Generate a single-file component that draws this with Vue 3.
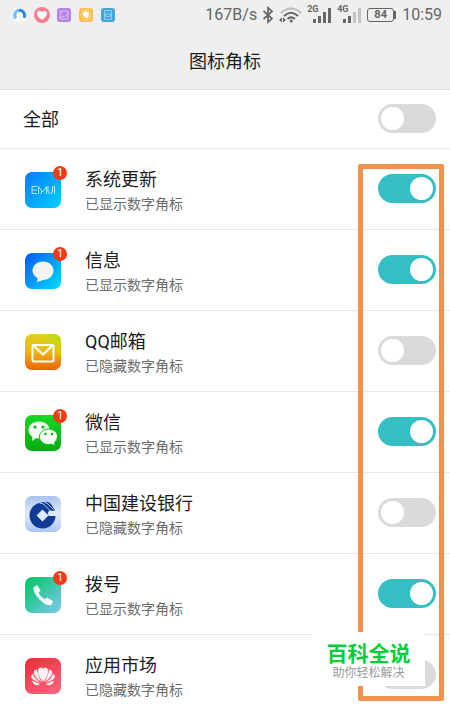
<script setup>
import { ref } from 'vue'

const all = ref(false)
const apps = ref([
  { id: 'emui', name: '系统更新', on: true },
  { id: 'sms', name: '信息', on: true },
  { id: 'mail', name: 'QQ邮箱', on: false },
  { id: 'wechat', name: '微信', on: true },
  { id: 'bank', name: '中国建设银行', on: false },
  { id: 'dial', name: '拨号', on: true },
  { id: 'market', name: '应用市场', on: false },
])
</script>

<template>
  <div class="page">
    <header class="top">
      <div class="status">
        <div class="notes">
          <svg width="16" height="16" viewBox="0 0 16 16">
            <rect x="1" y="1" width="14" height="14" rx="4" fill="#f8f8f8" />
            <path d="M3.800 11.500A5.200 5.200 0 1 1 13 9.500" fill="none" stroke="#6cc0f8" stroke-width="3" />
            <path d="M7 3.500Q13 3.500 12.500 11" fill="none" stroke="#2b7fe0" stroke-width="2.500" />
          </svg>
          <svg width="16" height="16" viewBox="0 0 16 16">
            <circle cx="8" cy="8" r="8" fill="#fa7d8e" />
            <path d="M8 12.800C1 8.500 2.500 3.500 5.800 3.800Q7.400 4 8 5.200Q8.600 4 10.200 3.800C13.500 3.500 15 8.500 8 12.800Z" fill="#fff" />
          </svg>
          <svg width="16" height="16" viewBox="0 0 16 16">
            <rect x="1" y="1" width="14" height="14" rx="3" fill="#b57fe6" />
            <path d="M4 4H12V12H4ZM4 11L7 9L8.500 10L12 6M5.500 6H7" fill="none" stroke="#e3ccf8" stroke-width=".9" />
          </svg>
          <svg width="16" height="16" viewBox="0 0 16 16">
            <rect x="1" y="1" width="14" height="14" rx="3" fill="#fbbd4c" />
            <path d="M5.500 3H10.500L13.200 8L10.500 13H5.500L2.800 8Z" fill="none" stroke="#fddc98" />
            <path d="M5 8V5.800H6V4.800H7.200V4.300H8.500V4.800H9.700V5.600H10.800V9Q10.500 11.300 8.500 11.300Q6.500 11.300 5 8Z" fill="#fff" />
          </svg>
          <svg width="16" height="16" viewBox="0 0 16 16">
            <rect x="1" y="1" width="14" height="14" rx="3" fill="#42a5dc" />
            <path d="M4.500 3.500H11.500V12.500H4.500ZM5.500 7H10.500V9.500H5.500Z" fill="none" stroke="#93d0f0" stroke-width=".9" />
          </svg>
        </div>
        <div class="system">
          <span class="clock">167B/s</span>
          <svg width="12" height="18" viewBox="0 0 12 18">
            <path d="M1.500 5L10 12.500L6 16.200V1.800L10 5.500L1.500 13" fill="none" stroke="#666" stroke-width="1.700" />
          </svg>
          <svg width="23" height="18" viewBox="0 0 23 18">
            <g fill="none" stroke-width="2">
              <path d="M2 7Q12 -2 22 7" stroke="#bbb" />
              <path d="M5 10Q12 3.500 19 10M8.500 13Q12 9.800 16 13" stroke="#666" />
            </g>
            <circle cx="12.200" cy="15" r="1.600" fill="#666" />
            <path d="M0 14L3 11.500V16.500ZM7 14L4 11.500V16.500Z" fill="#666" />
          </svg>
          <div class="signal">
            <span class="net">2G</span>
            <svg width="20" height="18" viewBox="0 0 20 18">
              <path d="M1 13H4V17H1ZM6 10H9V17H6ZM11 6H14V17H11ZM16 2H19V17H16Z" fill="#666" />
            </svg>
          </div>
          <div class="signal">
            <span class="net">4G</span>
            <svg width="20" height="18" viewBox="0 0 20 18">
              <path d="M1 13H4V17H1ZM6 10H9V17H6Z" fill="#666" />
              <path d="M11 6H14V17H11ZM16 2H19V17H16Z" fill="#c4c4c4" />
            </svg>
          </div>
          <span class="battery">84</span>
          <span class="clock">10:59</span>
        </div>
      </div>
      <h1>图标角标</h1>
    </header>

    <label class="all">
      <span class="name">全部</span>
      <input v-model="all" class="switch" type="checkbox" role="switch" />
    </label>

    <main>
      <label v-for="app in apps" :key="app.id" class="row">
        <span class="icon">
          <svg v-if="app.id === 'emui'" viewBox="0 0 36 36">
            <defs><linearGradient id="g-emui" x1="0" y1="0" x2="1" y2="1"><stop stop-color="#087bfa" /><stop offset="1" stop-color="#00d0ff" /></linearGradient></defs>
            <rect width="36" height="36" rx="7" fill="url(#g-emui)" />
            <path d="M12 14.500H7V21.500H12M7 18H12M13.500 22V14.500L17.500 20L21.500 14.500V22M15.500 22L17.500 19M23 14V19Q23 21.500 25.500 21.500Q27.500 21.500 27.500 19V14M29.500 14V22" fill="none" stroke="#d5f1ff" stroke-width=".9" />
          </svg>
          <svg v-else-if="app.id === 'sms'" viewBox="0 0 36 36">
            <defs><linearGradient id="g-sms" x1="0" y1="0" x2="1" y2="1"><stop stop-color="#0758f5" /><stop offset="1" stop-color="#00dcff" /></linearGradient></defs>
            <rect width="36" height="36" rx="7" fill="url(#g-sms)" />
            <path d="M18 8.500C24 8.500 28.500 12.500 28.500 17.500S24 27 18 27Q15.500 28.500 11.500 29Q13 27 12.500 25.200Q7.500 22 7.500 17.500C7.500 12.500 12 8.500 18 8.500Z" fill="#f2f3f5" />
          </svg>
          <svg v-else-if="app.id === 'mail'" viewBox="0 0 36 36">
            <defs>
              <linearGradient id="g-mail" x1="0" y1="0" x2="0" y2="1"><stop stop-color="#dfd020" /><stop offset=".5" stop-color="#f1b414" /><stop offset="1" stop-color="#ed6208" /></linearGradient>
              <radialGradient id="g-lime" cx="1" cy="0" r=".7"><stop stop-color="#a5e010" /><stop offset="1" stop-color="#d9dc20" stop-opacity="0" /></radialGradient>
            </defs>
            <rect width="36" height="36" rx="7" fill="url(#g-mail)" />
            <rect width="36" height="36" rx="7" fill="url(#g-lime)" />
            <rect x="7.500" y="11" width="21" height="16.500" rx="1" fill="none" stroke="#fff" stroke-width="2" />
            <path d="M9 12L18 20.500L27 12" fill="none" stroke="#fff" stroke-width="2" />
          </svg>
          <svg v-else-if="app.id === 'wechat'" viewBox="0 0 36 36">
            <defs><linearGradient id="g-we" x1="0" y1="0" x2="0" y2="1"><stop stop-color="#14d923" /><stop offset="1" stop-color="#05aa10" /></linearGradient></defs>
            <rect width="36" height="36" rx="7" fill="url(#g-we)" />
            <path d="M14 6.500C20 6.500 24.500 10 24.500 15S20 23.500 14 23.500L11 23.200L7 26L7.500 22Q3.500 19 3.500 15C3.500 10 8 6.500 14 6.500Z" fill="#f5fff5" />
            <path d="M23.500 14C28.500 14 32.500 17.300 32.500 21.500Q32.500 25 29.500 27.500L30 31L26.500 29L23.500 29.500C18.500 29.500 14.500 26 14.500 21.700S18.500 14 23.500 14Z" fill="#f5fff5" stroke="#0bbd18" />
            <g fill="#0bb817"><circle cx="10" cy="12" r="1.600" /><circle cx="18" cy="12" r="1.600" /><circle cx="20.500" cy="19" r="1.300" /><circle cx="27" cy="19" r="1.300" /></g>
          </svg>
          <svg v-else-if="app.id === 'bank'" viewBox="0 0 36 36">
            <defs><linearGradient id="g-bank" x1="0" y1="0" x2="0" y2="1"><stop stop-color="#a9c3ef" /><stop offset=".5" stop-color="#e0eafc" /><stop offset="1" stop-color="#a9c4f6" /></linearGradient></defs>
            <rect width="36" height="36" rx="7" fill="url(#g-bank)" />
            <circle cx="17.500" cy="19.500" r="13" fill="#123b98" />
            <path d="M17.500 13.500L23.500 19.500L17.500 25.500L11.500 19.500Z" fill="#dce8fc" />
            <path d="M24 14.500H32V20H24L22.500 18.300Z" fill="#dce8fc" />
            <path d="M19 6Q23 4.800 26 8L30 14.500H24.500L15.500 7Z" fill="#123b98" />
            <path d="M14.500 7Q18 7 20 9.500L25.500 15M19.500 6.500Q22.500 7 24 9L28.500 13.500" fill="none" stroke="#c8d9f7" stroke-width=".9" />
          </svg>
          <svg v-else-if="app.id === 'dial'" viewBox="0 0 36 36">
            <defs><linearGradient id="g-dial" x1="0" y1="0" x2="1" y2="1"><stop offset=".15" stop-color="#0dc774" /><stop offset="1" stop-color="#80c9f2" /></linearGradient></defs>
            <rect width="36" height="36" rx="7" fill="url(#g-dial)" />
            <path d="M9 10.500L12 8.500L15 13.500L13.200 16Q15.500 20.500 19.700 22.800L22 21L27.300 24Q27.500 26 25.500 28Q21 28.500 15.500 23Q8.500 16 9 10.500Z" fill="#f4fbf8" stroke="#f4fbf8" stroke-linejoin="round" />
          </svg>
          <svg v-else viewBox="0 0 36 36">
            <defs><linearGradient id="g-mk" x1="0" y1="0" x2=".6" y2="1"><stop stop-color="#ed2a37" /><stop offset="1" stop-color="#f96077" /></linearGradient></defs>
            <rect width="36" height="36" rx="7" fill="url(#g-mk)" />
            <g fill="#fff4f5">
              <path d="M17.500 24Q10.500 14 14 10Q16 9 17.500 10Q19 15 17.500 24Z" />
              <path d="M16.500 24.200Q7.500 17.500 8.800 13.500Q10 11.500 12 11.500Q12.500 17 16.500 24.200Z" />
              <path d="M15.500 24.800Q6 21.800 6.200 18.500Q6.300 16.800 7.500 15.800Q9.500 20.500 15.500 24.800Z" />
              <path d="M15 26Q12 28.300 9.500 26.500Q7.500 25 7 22.500Z" />
              <path d="M18.500 24Q25.500 14 22 10Q20 9 18.500 10Q17 15 18.500 24Z" />
              <path d="M19.500 24.200Q28.500 17.500 27.200 13.500Q26 11.500 24 11.500Q23.500 17 19.500 24.200Z" />
              <path d="M20.500 24.800Q30 21.800 29.800 18.500Q29.700 16.800 28.500 15.800Q26.500 20.500 20.500 24.800Z" />
              <path d="M21 26Q24 28.300 26.500 26.500Q28.500 25 29 22.500Z" />
            </g>
          </svg>
          <span v-if="app.on" class="badge">1</span>
        </span>
        <span class="text">
          <span class="name">{{ app.name }}</span>
          <span class="sub">{{ app.on ? '已显示数字角标' : '已隐藏数字角标' }}</span>
        </span>
        <input v-model="app.on" class="switch" type="checkbox" role="switch" />
      </label>
    </main>

    <div class="frame"></div>
    <aside class="mark">
      <strong>百科全说</strong>
      <span>助你轻松解决</span>
    </aside>
  </div>
</template>

<style>
body {
  background: #fff;
}
</style>

<style scoped>
.page {
  position: relative;
  overflow: hidden;
  font-family: Roboto, "Noto Sans CJK SC", sans-serif;
  color: #1c1c1c;
}
.top {
  background: #efefef;
  border-bottom: 1px solid #dadada;
}
.status {
  display: flex;
  justify-content: space-between;
  align-items: center;
  height: 30px;
  padding: 0 8px 0 12px;
}
.notes,
.system {
  display: flex;
  align-items: center;
}
.notes {
  gap: 6px;
}
.system {
  gap: 5px;
  color: #666;
}
svg {
  display: block;
}
.clock {
  font-size: 16px;
  line-height: 20px;
}
.signal {
  position: relative;
  padding-left: 5px;
}
.net {
  position: absolute;
  left: 0;
  top: -2px;
  font-size: 9px;
  line-height: 10px;
  font-weight: 700;
}
.battery {
  position: relative;
  width: 25px;
  margin-right: 3px;
  border: 1px solid #666;
  border-radius: 3px;
  font-size: 11px;
  line-height: 12px;
  font-weight: 700;
  text-align: center;
}
.battery::after {
  content: "";
  position: absolute;
  right: -3px;
  top: 2px;
  width: 2px;
  height: 8px;
  background: #666;
}
h1 {
  margin: 0;
  padding: 20px 0 15px;
  font-size: 18px;
  line-height: 24px;
  font-weight: 400;
  text-align: center;
}
.all {
  display: flex;
  align-items: flex-end;
  justify-content: space-between;
  padding: 14px 14px 15px 23px;
  border-bottom: 1px solid #e8e8e8;
}
.row {
  display: flex;
  align-items: flex-start;
  padding: 18px 14px 14px 25px;
  border-bottom: 1px solid #e8e8e8;
}
.row:last-child {
  padding-bottom: 10px;
  border-bottom: 0;
}
.icon {
  position: relative;
  width: 36px;
  height: 36px;
  margin: 5px 24px 0 0;
}
.badge {
  position: absolute;
  right: -6px;
  top: -6px;
  width: 14px;
  border-radius: 7px;
  background: #f43b16;
  color: #fff;
  font-size: 11px;
  line-height: 14px;
  text-align: center;
}
.text {
  flex: 1;
}
.name,
.sub {
  display: block;
}
.name {
  font-size: 18px;
  line-height: 26px;
}
.sub {
  font-size: 14px;
  line-height: 22px;
  color: #6c6c6c;
}
.switch {
  appearance: none;
  width: 58px;
  height: 29px;
  margin: 0;
  padding: 3px;
  box-sizing: border-box;
  display: flex;
  border-radius: 15px;
  background: #dadada;
}
.row .switch {
  margin-top: 7px;
}
.switch::before {
  content: "";
  width: 23px;
  height: 23px;
  border-radius: 50%;
  background: #fff;
}
.switch:checked {
  justify-content: flex-end;
  background: #35bfc5;
}
.frame {
  position: absolute;
  top: 164px;
  right: 6px;
  bottom: 10px;
  width: 86px;
  box-sizing: border-box;
  border: 5px solid #f2914c;
  border-radius: 2px;
  pointer-events: none;
}
.mark {
  position: absolute;
  right: 25px;
  bottom: 25px;
  width: 113px;
  padding: 10px 0 5px;
  box-sizing: border-box;
  background: #fff;
  text-align: center;
}
.mark strong,
.mark span {
  display: block;
}
.mark strong {
  font-size: 21px;
  line-height: 24px;
  color: #05cf38;
}
.mark span {
  font-size: 12px;
  line-height: 15px;
  color: #999;
}
</style>
